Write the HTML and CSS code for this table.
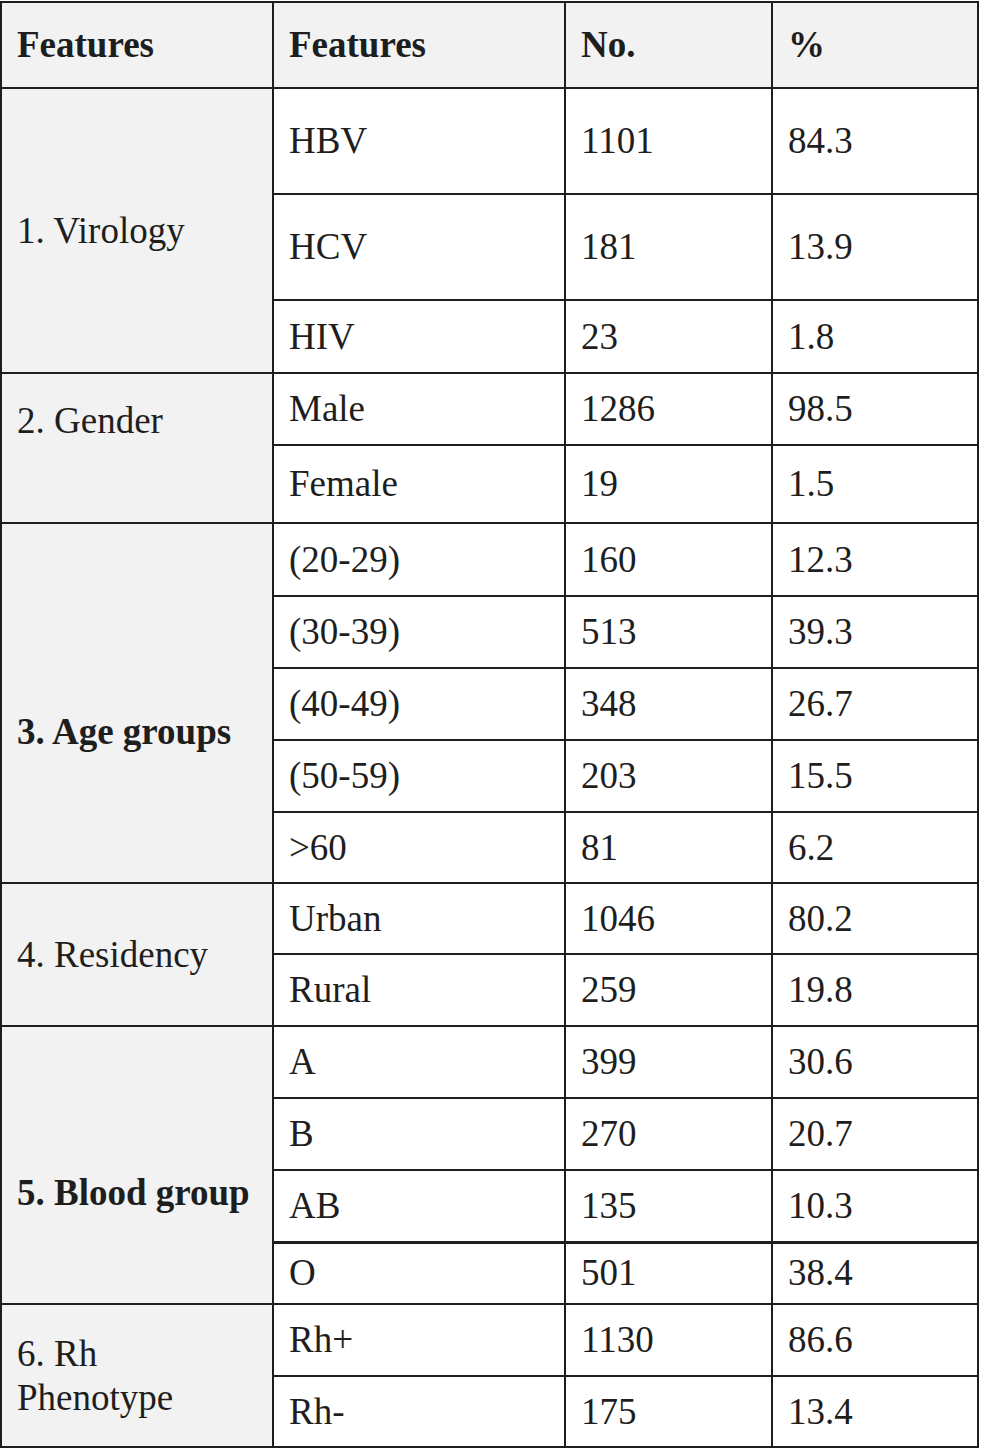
FILE: index.html
```html
<!DOCTYPE html>
<html lang="en">
<head>
<meta charset="utf-8">
<title>Features table</title>
<link rel="stylesheet" href="styles.css">
</head>
<body>
<table class="data">
  <colgroup>
    <col class="c1"><col class="c2"><col class="c3"><col class="c4">
  </colgroup>
  <thead>
    <tr class="h-head"><th>Features</th><th>Features</th><th>No.</th><th>%</th></tr>
  </thead>
  <tbody>
    <tr class="h-106"><td class="grp" rowspan="3">1. Virology</td><td>HBV</td><td>1101</td><td>84.3</td></tr>
    <tr class="h-106"><td>HCV</td><td>181</td><td>13.9</td></tr>
    <tr class="h-73"><td>HIV</td><td>23</td><td>1.8</td></tr>

    <tr class="h-72"><td class="grp up" rowspan="2">2. Gender</td><td>Male</td><td>1286</td><td>98.5</td></tr>
    <tr class="h-78"><td>Female</td><td>19</td><td>1.5</td></tr>

    <tr class="h-73"><td class="grp down b" rowspan="5">3. Age groups</td><td>(20-29)</td><td>160</td><td>12.3</td></tr>
    <tr class="h-72"><td>(30-39)</td><td>513</td><td>39.3</td></tr>
    <tr class="h-72"><td>(40-49)</td><td>348</td><td>26.7</td></tr>
    <tr class="h-72"><td>(50-59)</td><td>203</td><td>15.5</td></tr>
    <tr class="h-71"><td>&gt;60</td><td>81</td><td>6.2</td></tr>

    <tr class="h-71"><td class="grp" rowspan="2">4. Residency</td><td>Urban</td><td>1046</td><td>80.2</td></tr>
    <tr class="h-72"><td>Rural</td><td>259</td><td>19.8</td></tr>

    <tr class="h-72"><td class="grp down2 b" rowspan="4">5. Blood group</td><td>A</td><td>399</td><td>30.6</td></tr>
    <tr class="h-72"><td>B</td><td>270</td><td>20.7</td></tr>
    <tr class="h-72"><td>AB</td><td>135</td><td>10.3</td></tr>
    <tr class="h-62 thick"><td>O</td><td>501</td><td>38.4</td></tr>

    <tr class="h-72"><td class="grp" rowspan="2">6. Rh<br>Phenotype</td><td>Rh+</td><td>1130</td><td>86.6</td></tr>
    <tr class="h-71"><td>Rh-</td><td>175</td><td>13.4</td></tr>
  </tbody>
</table>
</body>
</html>
```

FILE: styles.css
```css
html, body {
  margin: 0;
  padding: 0;
  background: #ffffff;
}

body {
  padding-top: 1px;
  font-family: "Liberation Serif", "Times New Roman", serif;
  color: #1e1e1e;
}

.data {
  border-collapse: collapse;
  table-layout: fixed;
  width: 979px;
  font-size: 37px;
  line-height: 44px;
}

.c1 { width: 272px; }
.c2 { width: 292px; }
.c3 { width: 207px; }
.c4 { width: 206px; }

.data th,
.data td {
  border: 2px solid #1e1e1e;
  padding: 0 8px 0 15px;
  text-align: left;
  vertical-align: middle;
}

.data th {
  background: #f2f2f2;
  font-weight: bold;
}

.data td.grp {
  background: #f2f2f2;
}

.data td.b { font-weight: bold; }

.data td.up { padding-bottom: 54px; }
.data td.down { padding-top: 58px; }
.data td.down2 { padding-top: 56px; }

.data tr.thick td { border-top-width: 3px; }

.h-head { height: 86px; }
.h-106 { height: 106px; }
.h-78 { height: 78px; }
.h-73 { height: 73px; }
.h-72 { height: 72px; }
.h-71 { height: 71px; }
.h-62 { height: 62px; }
```
